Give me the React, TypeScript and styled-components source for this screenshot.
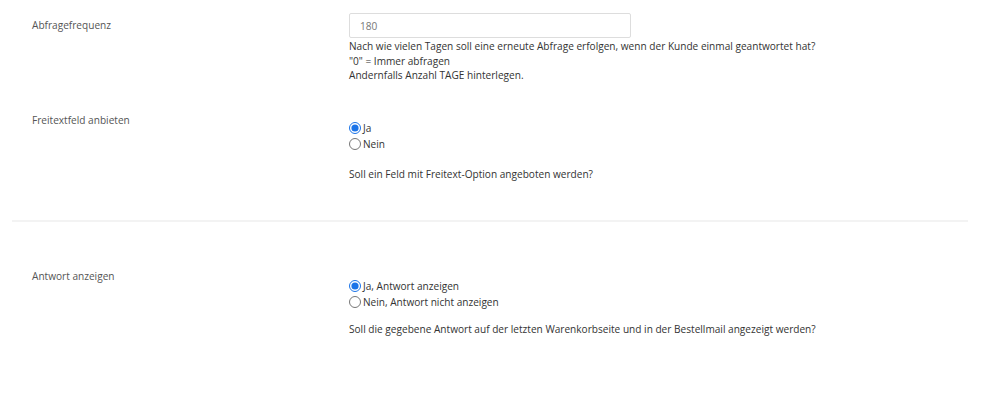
import React from "react";
import styled, { createGlobalStyle } from "styled-components";

const Global = createGlobalStyle`
  html, body { margin: 0; padding: 0; background: #fff; }
  body { font-family: "Open Sans", "Noto Sans", sans-serif; color: #333; }
`;

const Page = styled.div`
  width: 1000px;
  height: 403px;
  background: #fff;
  padding: 0 32px 0 12px;
  box-sizing: border-box;
`;

const Row = styled.div<{ $top: number; $bottom: number }>`
  display: grid;
  grid-template-columns: 317px 1fr;
  padding: ${(p) => p.$top}px 0 ${(p) => p.$bottom}px 20px;
`;

const Label = styled.div<{ $offset: number }>`
  font-size: 10.1px;
  line-height: 14px;
  color: #555;
  padding-top: ${(p) => p.$offset}px;
`;

const Field = styled.div`
  display: flex;
  flex-direction: column;
  align-items: flex-start;
`;

const Input = styled.input`
  width: 282px;
  height: 25px;
  box-sizing: border-box;
  border: 1px solid #ddd;
  border-radius: 2px;
  padding: 0 10px;
  font-family: inherit;
  font-size: 10.1px;
  color: #777;
  outline: none;
`;

const Help = styled.div<{ $gap: number }>`
  font-size: 10.1px;
  line-height: 14.5px;
  color: #333;
  margin-top: ${(p) => p.$gap}px;
`;

const Radios = styled.div<{ $offset: number }>`
  display: flex;
  flex-direction: column;
  margin-top: ${(p) => p.$offset}px;
`;

const RadioLabel = styled.label`
  display: flex;
  align-items: center;
  gap: 2px;
  font-size: 10.1px;
  line-height: 16px;
  color: #333;
`;

const Radio = styled.input`
  width: 12px;
  height: 12px;
  margin: 0;
  accent-color: #1a73e8;
`;

const Divider = styled.hr`
  border: none;
  height: 2px;
  background: #f3f3f3;
  margin: 0;
`;

export default function App() {
  return (
    <>
      <Global />
      <Page>
        <Row $top={13} $bottom={18}>
          <Label $offset={5}>Abfragefrequenz</Label>
          <Field>
            <Input defaultValue="180" />
            <Help $gap={1}>
              Nach wie vielen Tagen soll eine erneute Abfrage erfolgen, wenn der Kunde einmal geantwortet hat?
              <br />"0" = Immer abfragen
              <br />Andernfalls Anzahl TAGE hinterlegen.
            </Help>
          </Field>
        </Row>
        <Row $top={8} $bottom={39}>
          <Label $offset={4}>Freitextfeld anbieten</Label>
          <Field>
            <Radios $offset={11}>
              <RadioLabel>
                <Radio type="radio" name="freitext" defaultChecked /> Ja
              </RadioLabel>
              <RadioLabel>
                <Radio type="radio" name="freitext" /> Nein
              </RadioLabel>
            </Radios>
            <Help $gap={15}>Soll ein Feld mit Freitext-Option angeboten werden?</Help>
          </Field>
        </Row>
        <Divider />
        <Row $top={47} $bottom={20}>
          <Label $offset={0}>Antwort anzeigen</Label>
          <Field>
            <Radios $offset={9}>
              <RadioLabel>
                <Radio type="radio" name="antwort" defaultChecked /> Ja, Antwort anzeigen
              </RadioLabel>
              <RadioLabel>
                <Radio type="radio" name="antwort" /> Nein, Antwort nicht anzeigen
              </RadioLabel>
            </Radios>
            <Help $gap={12}>
              Soll die gegebene Antwort auf der letzten Warenkorbseite und in der Bestellmail angezeigt werden?
            </Help>
          </Field>
        </Row>
      </Page>
    </>
  );
}
